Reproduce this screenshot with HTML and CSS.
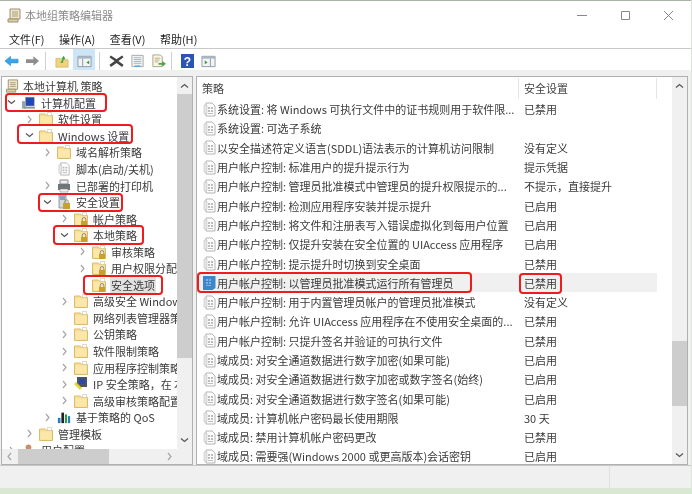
FILE: index.html
```html
<!DOCTYPE html>
<html lang="zh-CN">
<head>
<meta charset="utf-8">
<title>本地组策略编辑器</title>
<link rel="stylesheet" href="styles.css">
</head>
<body>
<svg class="defs" width="0" height="0">
  <symbol id="folder" viewBox="0 0 14 14">
    <path d="M.5 2h6l1 1.500h6v10H.5z" fill="#f9df93" stroke="#dcbc6c" stroke-width="1"/>
    <path d="M8.500 .5h4v3h-4z" fill="#fff" stroke="#cfc8ae" stroke-width=".7"/>
    <path d="M1.500 4.500h11v8h-11z" fill="#fbe7a9"/>
  </symbol>
  <symbol id="lockfolder" viewBox="0 0 14 14">
    <use href="#folder"/>
    <path d="M7 9h6v5H7z" fill="#caa02c"/>
    <path d="M8.200 9V7.300a1.800 1.800 0 0 1 3.600 0V9" fill="none" stroke="#8d8a7c" stroke-width="1"/>
  </symbol>
  <symbol id="doc" viewBox="0 0 13 15">
    <path d="M3 1h6l3 3v10H3z" fill="#fff" stroke="#b3b3b3"/>
    <path d="M1 3h3v9H1z" fill="#e6e6e6" stroke="#c4c4c4" stroke-width=".6"/>
    <path d="M5 5h2v2H5zM8 5h2v2H8zM5 8h2v2H5zM8 8h2v2H8zM5 11h5v1H5z" fill="#bcbcbc"/>
  </symbol>
  <symbol id="docsel" viewBox="0 0 13 15">
    <path d="M0 1h12.500V13l-3 2H0z" fill="#3f86c9"/>
    <path d="M3 4h2v2H3zM6 4h2v2H6zM3 7h2v2H3zM6 7h2v2H6zM3 10h5v1H3z" fill="#7fb2e2"/>
  </symbol>
  <symbol id="scroll" viewBox="0 0 14 15">
    <path d="M3 1h10v10H3z" fill="#efe6c8" stroke="#9a9075"/>
    <path d="M1 11h10v3H1z" fill="#ddd0a6" stroke="#9a9075"/>
    <path d="M5 4h6M5 6h6M5 8h6" stroke="#a79d80"/>
  </symbol>
  <symbol id="gt" viewBox="0 0 7 9"><path d="M2 1l3 3.500-3 3.500" fill="none" stroke="#a6a6a6" stroke-width="1.200"/></symbol>
  <symbol id="dn" viewBox="0 0 9 7"><path d="M1 1.500l3.500 3 3.500-3" fill="none" stroke="#555" stroke-width="1.200"/></symbol>
</svg>

<div class="window">
  <header class="titlebar">
    <svg class="title-icon"><use href="#scroll"/></svg>
    <span class="title-text">本地组策略编辑器</span>
    <div class="controls">
      <svg class="ctl" viewBox="0 0 11 11"><path d="M0 5.500h10" stroke="#888"/></svg>
      <svg class="ctl" viewBox="0 0 11 11"><path d="M1.500 1.500h8v8h-8z" fill="none" stroke="#888"/></svg>
      <svg class="ctl" viewBox="0 0 11 11"><path d="M1 1l9 9M10 1l-9 9" stroke="#888"/></svg>
    </div>
  </header>

  <nav class="menubar">
    <span>文件(F)</span><span>操作(A)</span><span>查看(V)</span><span>帮助(H)</span>
  </nav>

  <div class="toolbar">
    <span class="tool"><svg viewBox="0 0 16 14"><path d="M1 7l6-5v3h8v4H7v3z" fill="#3ba6e6" stroke="#2a86c4" stroke-width=".6"/></svg></span>
    <span class="tool"><svg viewBox="0 0 16 14"><path d="M15 7L9 2v3H1v4h8v3z" fill="#8e8e8e"/></svg></span>
    <i class="sep"></i>
    <span class="tool narrow"><svg viewBox="0 0 16 14"><path d="M1 4h5l1 1.500h8V14H1z" fill="#f1d27e" stroke="#c8a858" stroke-width=".7"/><path d="M6 9l3-4-2 0 3-4 2 4-2 0-1 4z" fill="#3aa53a"/></svg></span>
    <span class="tool active"><svg viewBox="0 0 16 14"><path d="M1 2h14v11H1z" fill="#f4f4f4" stroke="#8b9aa5"/><path d="M1 2h14v2.500H1z" fill="#a9b7c2"/><path d="M6 4.500V13" stroke="#8b9aa5"/><path d="M13 6.500v4l-3-2z" fill="#2f9b46"/></svg></span>
    <i class="sep tight"></i>
    <span class="tool after-tight"><svg viewBox="0 0 16 14"><path d="M2 1l6 4 6-4 1.500 2L10 7l5.500 4-1.500 2.500L8 9l-6 4.500L.500 11 6 7 .5 3z" fill="#444"/></svg></span>
    <span class="tool"><svg viewBox="0 0 16 14"><path d="M2 1h12v12H2z" fill="#f2f2f2" stroke="#a7a7a7"/><path d="M4 3.500h8M4 5.500h8M4 7.500h8M4 9.500h8" stroke="#a8b6c0"/><path d="M5 12.500h6" stroke="#46a7dd" stroke-width="1.500"/></svg></span>
    <span class="tool"><svg viewBox="0 0 16 14"><path d="M2 .5h8l2 2V13H2z" fill="#faf6e4" stroke="#a8a38e"/><path d="M4 4h6M4 6h5M4 8h4" stroke="#b5ad90"/><path d="M8 9h4V7l4 3-4 3v-2H8z" fill="#48a948"/></svg></span>
    <i class="sep"></i>
    <span class="tool helpbtn"><svg viewBox="0 0 13 14"><path d="M0 0h13v14H0z" fill="#2b55b5"/><text x="6.500" y="11.500" text-anchor="middle" class="help-q">?</text></svg></span>
    <span class="tool viewbtn"><svg viewBox="0 0 16 14"><path d="M1 2h14v11H1z" fill="#f4f4f4" stroke="#8b9aa5"/><path d="M1 2h14v2.500H1z" fill="#a9b7c2"/><path d="M10 4.500V13" stroke="#8b9aa5"/><path d="M4 6.500v4l3-2z" fill="#2f9b46"/></svg></span>
  </div>

  <main class="panes">
    <section class="tree-pane">
      <div class="tree-body">
        <ul class="tree">
          <li class="node l0"><i class="chev"></i><svg class="ico"><use href="#scroll"/></svg><span>本地计算机 策略</span></li>
          <li class="node l1"><svg class="chev dn"><use href="#dn"/></svg><svg class="ico wide" viewBox="0 0 16 14"><path d="M5 1h9v9H5z" fill="#1d48b8" stroke="#666" stroke-width=".6"/><path d="M1 5h4v8H1z" fill="#9aa3ad"/><path d="M3 11h12v2H3z" fill="#8d97a3"/></svg><span>计算机配置</span></li>
          <li class="node l2"><svg class="chev gt"><use href="#gt"/></svg><svg class="ico"><use href="#folder"/></svg><span>软件设置</span></li>
          <li class="node l2"><svg class="chev dn"><use href="#dn"/></svg><svg class="ico"><use href="#folder"/></svg><span>Windows 设置</span></li>
          <li class="node l3"><svg class="chev gt"><use href="#gt"/></svg><svg class="ico"><use href="#folder"/></svg><span>域名解析策略</span></li>
          <li class="node l3"><i class="chev"></i><svg class="ico"><use href="#doc"/></svg><span>脚本(启动/关机)</span></li>
          <li class="node l3"><svg class="chev gt"><use href="#gt"/></svg><svg class="ico" viewBox="0 0 14 14"><path d="M3 1h8v4H3z" fill="#eee" stroke="#888"/><path d="M1 5h12v6H1z" fill="#6f7479"/><path d="M3 10h8v3H3z" fill="#f2f2f2" stroke="#888" stroke-width=".6"/></svg><span>已部署的打印机</span></li>
          <li class="node l3"><svg class="chev dn"><use href="#dn"/></svg><svg class="ico" viewBox="0 0 14 14"><path d="M2 0h7v13H2z" fill="#d5dade" stroke="#6d7884" stroke-width=".7"/><path d="M3 2h5M3 4h5" stroke="#4a6ea3"/><path d="M6 8h7v6H6z" fill="#caa02c"/><path d="M7.800 8V6.500a1.700 1.700 0 0 1 3.400 0V8" fill="none" stroke="#8d8a7c"/></svg><span>安全设置</span></li>
          <li class="node l4"><svg class="chev gt"><use href="#gt"/></svg><svg class="ico"><use href="#lockfolder"/></svg><span>帐户策略</span></li>
          <li class="node l4"><svg class="chev dn"><use href="#dn"/></svg><svg class="ico"><use href="#lockfolder"/></svg><span>本地策略</span></li>
          <li class="node l5"><svg class="chev gt"><use href="#gt"/></svg><svg class="ico"><use href="#lockfolder"/></svg><span>审核策略</span></li>
          <li class="node l5"><svg class="chev gt"><use href="#gt"/></svg><svg class="ico"><use href="#lockfolder"/></svg><span>用户权限分配</span></li>
          <li class="node l5"><i class="chev"></i><svg class="ico"><use href="#lockfolder"/></svg><span class="picked">安全选项</span></li>
          <li class="node l4"><svg class="chev gt"><use href="#gt"/></svg><svg class="ico"><use href="#folder"/></svg><span>高级安全 Windows Defender 防火墙</span></li>
          <li class="node l4"><i class="chev"></i><svg class="ico"><use href="#folder"/></svg><span>网络列表管理器策略</span></li>
          <li class="node l4"><svg class="chev gt"><use href="#gt"/></svg><svg class="ico"><use href="#folder"/></svg><span>公钥策略</span></li>
          <li class="node l4"><svg class="chev gt"><use href="#gt"/></svg><svg class="ico"><use href="#folder"/></svg><span>软件限制策略</span></li>
          <li class="node l4"><svg class="chev gt"><use href="#gt"/></svg><svg class="ico"><use href="#folder"/></svg><span>应用程序控制策略</span></li>
          <li class="node l4"><svg class="chev gt"><use href="#gt"/></svg><svg class="ico" viewBox="0 0 14 14"><path d="M3 0h10v10H3z" fill="#4c5561"/><path d="M5 2h6v5H5z" fill="#2a49a8"/><path d="M0 7l6 6 2-2-6-6z" fill="#e4d332"/></svg><span>IP 安全策略，在 本地计算机</span></li>
          <li class="node l4"><svg class="chev gt"><use href="#gt"/></svg><svg class="ico"><use href="#folder"/></svg><span>高级审核策略配置</span></li>
          <li class="node l3"><svg class="chev gt"><use href="#gt"/></svg><svg class="ico" viewBox="0 0 16 14"><path d="M1 8h3v6H1z" fill="#2a78c8"/><path d="M5 2h3v12H5z" fill="#222"/><path d="M9 4h2.500v10H9z" fill="#2f9b46"/><path d="M12.500 6H15v8h-2.500z" fill="#2a78c8"/></svg><span>基于策略的 QoS</span></li>
          <li class="node l2"><svg class="chev gt"><use href="#gt"/></svg><svg class="ico"><use href="#folder"/></svg><span>管理模板</span></li>
          <li class="node l1"><svg class="chev gt"><use href="#gt"/></svg><svg class="ico wide" viewBox="0 0 16 14"><circle cx="8" cy="4" r="3" fill="#c98e68"/><path d="M3 14c0-4 2-6 5-6s5 2 5 6z" fill="#6b7785"/></svg><span>用户配置</span></li>
        </ul>
        <div class="vscroll">
          <svg class="sb-arrow up"><use href="#dn"/></svg>
          <div class="sb-track tree-track"><div class="sb-thumb tree-thumb"></div></div>
          <svg class="sb-arrow"><use href="#dn"/></svg>
        </div>
      </div>
      <div class="hscroll">
        <svg class="sb-h left"><use href="#gt"/></svg>
        <div class="h-track"><div class="h-thumb"></div></div>
        <svg class="sb-h"><use href="#gt"/></svg>
        <div class="corner"></div>
      </div>
    </section>

    <section class="list-pane">
      <div class="list-body">
        <div class="list">
          <div class="head"><span class="c1">策略</span><span class="c2">安全设置</span><span class="c3"></span></div>
          <div class="row"><svg class="doc"><use href="#doc"/></svg><span class="c1">系统设置: 将 Windows 可执行文件中的证书规则用于软件限...</span><span class="c2">已禁用</span></div>
          <div class="row"><svg class="doc"><use href="#doc"/></svg><span class="c1">系统设置: 可选子系统</span><span class="c2"></span></div>
          <div class="row"><svg class="doc"><use href="#doc"/></svg><span class="c1">以安全描述符定义语言(SDDL)语法表示的计算机访问限制</span><span class="c2">没有定义</span></div>
          <div class="row"><svg class="doc"><use href="#doc"/></svg><span class="c1">用户帐户控制: 标准用户的提升提示行为</span><span class="c2">提示凭据</span></div>
          <div class="row"><svg class="doc"><use href="#doc"/></svg><span class="c1">用户帐户控制: 管理员批准模式中管理员的提升权限提示的...</span><span class="c2">不提示，直接提升</span></div>
          <div class="row"><svg class="doc"><use href="#doc"/></svg><span class="c1">用户帐户控制: 检测应用程序安装并提示提升</span><span class="c2">已启用</span></div>
          <div class="row"><svg class="doc"><use href="#doc"/></svg><span class="c1">用户帐户控制: 将文件和注册表写入错误虚拟化到每用户位置</span><span class="c2">已启用</span></div>
          <div class="row"><svg class="doc"><use href="#doc"/></svg><span class="c1">用户帐户控制: 仅提升安装在安全位置的 UIAccess 应用程序</span><span class="c2">已启用</span></div>
          <div class="row"><svg class="doc"><use href="#doc"/></svg><span class="c1">用户帐户控制: 提示提升时切换到安全桌面</span><span class="c2">已禁用</span></div>
          <div class="row selected"><svg class="doc"><use href="#docsel"/></svg><span class="c1">用户帐户控制: 以管理员批准模式运行所有管理员</span><span class="c2">已禁用</span></div>
          <div class="row"><svg class="doc"><use href="#doc"/></svg><span class="c1">用户帐户控制: 用于内置管理员帐户的管理员批准模式</span><span class="c2">没有定义</span></div>
          <div class="row"><svg class="doc"><use href="#doc"/></svg><span class="c1">用户帐户控制: 允许 UIAccess 应用程序在不使用安全桌面的...</span><span class="c2">已禁用</span></div>
          <div class="row"><svg class="doc"><use href="#doc"/></svg><span class="c1">用户帐户控制: 只提升签名并验证的可执行文件</span><span class="c2">已禁用</span></div>
          <div class="row"><svg class="doc"><use href="#doc"/></svg><span class="c1">域成员: 对安全通道数据进行数字加密(如果可能)</span><span class="c2">已启用</span></div>
          <div class="row"><svg class="doc"><use href="#doc"/></svg><span class="c1">域成员: 对安全通道数据进行数字加密或数字签名(始终)</span><span class="c2">已启用</span></div>
          <div class="row"><svg class="doc"><use href="#doc"/></svg><span class="c1">域成员: 对安全通道数据进行数字签名(如果可能)</span><span class="c2">已启用</span></div>
          <div class="row"><svg class="doc"><use href="#doc"/></svg><span class="c1">域成员: 计算机帐户密码最长使用期限</span><span class="c2">30 天</span></div>
          <div class="row"><svg class="doc"><use href="#doc"/></svg><span class="c1">域成员: 禁用计算机帐户密码更改</span><span class="c2">已禁用</span></div>
          <div class="row"><svg class="doc"><use href="#doc"/></svg><span class="c1">域成员: 需要强(Windows 2000 或更高版本)会话密钥</span><span class="c2">已启用</span></div>
        </div>
        <div class="vscroll list-scroll">
          <svg class="sb-arrow up"><use href="#dn"/></svg>
          <div class="sb-track list-track"><div class="sb-thumb list-thumb"></div></div>
          <svg class="sb-arrow"><use href="#dn"/></svg>
        </div>
      </div>
    </section>
  </main>

  <footer class="statusbar"><div class="status-a"></div><div class="status-b"></div></footer>

  <div class="mark m1"></div>
  <div class="mark m2"></div>
  <div class="mark m3"></div>
  <div class="mark m4"></div>
  <div class="mark m5"></div>
  <div class="mark m6"></div>
  <div class="mark m7"></div>
</div>
</body>
</html>
```

FILE: styles.css
```css
* { box-sizing: border-box; }
html, body { margin: 0; padding: 0; }
body {
  width: 692px;
  height: 494px;
  overflow: hidden;
  background: #d9e8d2;
  font-family: "Noto Sans CJK SC", "Noto Sans", sans-serif;
  font-size: 11px;
  color: #3a3a3a;
}
.defs { position: absolute; }
svg { display: block; flex: none; }

.window {
  position: relative;
  height: 488px;
  width: 691px;
  border-top: 1px solid #a9b3a4;
  background: #fff;
  display: flex;
  flex-direction: column;
  filter: blur(.45px);
}

.titlebar {
  height: 28px;
  display: flex;
  align-items: center;
  padding-left: 7px;
}
.title-icon { width: 14px; height: 15px; }
.title-text { margin-left: 4px; color: #8a8a8a; }
.controls {
  margin-left: auto;
  display: flex;
  gap: 32px;
  padding-right: 17px;
  padding-top: 1px;
}
.ctl { width: 11px; height: 11px; }

.menubar {
  height: 20px;
  display: flex;
  gap: 14.5px;
  align-items: center;
  padding-left: 9px;
  color: #222;
  border-bottom: 1px solid #c9c9c9;
}

.toolbar {
  height: 21px;
  display: flex;
  align-items: center;
  padding-left: 4px;
  background: #fff;
}
.tool { display: flex; align-items: center; justify-content: center; width: 15px; height: 21px; padding-top: 2px; }
.tool svg { width: 15px; height: 14px; }
.tool + .tool { margin-left: 6px; }
.tool.narrow { width: 14px; }
.tool.narrow svg { width: 14px; }
.tool.active { width: 22px; margin-left: 4px; background: #cde6f7; }
.tool.after-tight { margin-left: 4px; }
.tool.helpbtn { width: 13px; }
.tool.helpbtn svg { width: 13px; }
.tool.viewbtn { margin-left: 7px; }
.help-q { font: bold 12px "Liberation Sans", sans-serif; fill: #fff; }
.sep { width: 1px; height: 18px; margin: 2px 0 0 5px; background: #cfcfcf; }
.sep + .tool { margin-left: 9px; }
.sep.tight { margin-left: 4px; }

.panes {
  flex: 1;
  min-height: 0;
  display: flex;
  gap: 3px;
  background: #f0f0f0;
  padding: 6px 3px 0 1px;
  border-bottom: 1px solid #c8c8c8;
}
.tree-pane {
  width: 192px;
  border: 1px solid #b0b0b0;
  background: #fff;
  display: flex;
  flex-direction: column;
  overflow: hidden;
}
.tree-body { flex: 1; min-height: 0; display: flex; }
.tree {
  list-style: none;
  margin: 0;
  padding: 1px 0 0;
  flex: 1;
  min-width: 0;
  overflow: hidden;
}
.node {
  height: 16.55px;
  display: flex;
  align-items: center;
  white-space: nowrap;
}
.chev { width: 7px; height: 9px; flex: none; }
.chev.dn { width: 9px; height: 7px; margin: 0 -1px; }
.ico { width: 14px; height: 14px; margin-left: 6px; margin-right: 5px; }
.ico.wide { width: 15px; }
.l0 .chev { width: 0; }
.l0 .ico { margin-left: 3px; margin-right: 4px; }
.l1 { padding-left: 6px; }
.l2 { padding-left: 24px; }
.l3 { padding-left: 42px; }
.l4 { padding-left: 59px; }
.l5 { padding-left: 77px; }
.picked { background: #e2e2e2; padding: 0 1px; margin-left: -1px; }

.vscroll {
  width: 15px;
  flex: none;
  background: #f0f0f0;
  display: flex;
  flex-direction: column;
  align-items: center;
}
.sb-arrow { width: 9px; height: 7px; margin: 5px 0; }
.sb-arrow.up { transform: scaleY(-1); }
.sb-track { flex: 1; width: 100%; }
.sb-thumb { background: #cdcdcd; width: 100%; }
.tree-thumb { height: 264px; }
.list-track { padding-top: 247px; }
.list-thumb { height: 65px; }

.hscroll {
  height: 15px;
  background: #f0f0f0;
  display: flex;
  align-items: center;
  flex: none;
}
.sb-h { width: 7px; height: 9px; margin: 0 4px; }
.sb-h.left { transform: scaleX(-1); }
.h-track { flex: 1; height: 100%; }
.h-thumb { width: 91px; height: 100%; background: #cdcdcd; margin-left: 1px; }
.corner { width: 15px; }

.list-pane {
  flex: 1;
  min-width: 0;
  border: 1px solid #b0b0b0;
  background: #fff;
  overflow: hidden;
}
.list-body { height: 100%; display: flex; }
.list { flex: 1; min-width: 0; overflow: hidden; }
.head {
  height: 22.5px;
  display: flex;
  align-items: center;
  padding-top: 1px;
  color: #444;
}
.head .c1 { width: 322px; padding-left: 5px; border-right: 1px solid #e5e5e5; line-height: 21px; }
.head .c2 { width: 138px; padding-left: 5px; border-right: 1px solid #e5e5e5; line-height: 21px; }
.row {
  height: 19.3px;
  display: flex;
  align-items: center;
  white-space: nowrap;
  padding-left: 6px;
}
.row .doc { width: 13px; height: 15px; margin-right: 1px; }
.row .c1 { width: 301px; overflow: hidden; }
.row .c2 { padding-left: 6px; }
.row.selected { background: #f0f0f0; width: 460px; }

.statusbar {
  height: 22px;
  flex: none;
  display: flex;
  background: #f0f0f0;
}
.status-a { width: 610px; border-right: 1px solid #e0e0e0; }
.status-b { flex: 1; }

.mark {
  position: absolute;
  border: 2.5px solid #ee1c1c;
  border-radius: 4px;
}
.m1 { left: 5px; top: 92px; width: 102px; height: 19px; }
.m2 { left: 17px; top: 123px; width: 116px; height: 20px; }
.m3 { left: 38px; top: 192px; width: 85px; height: 19px; }
.m4 { left: 53px; top: 224px; width: 91px; height: 20px; }
.m5 { left: 83px; top: 274px; width: 80px; height: 20px; }
.m6 { left: 197px; top: 271px; width: 275px; height: 21px; }
.m7 { left: 519px; top: 272px; width: 43px; height: 21px; }
```
